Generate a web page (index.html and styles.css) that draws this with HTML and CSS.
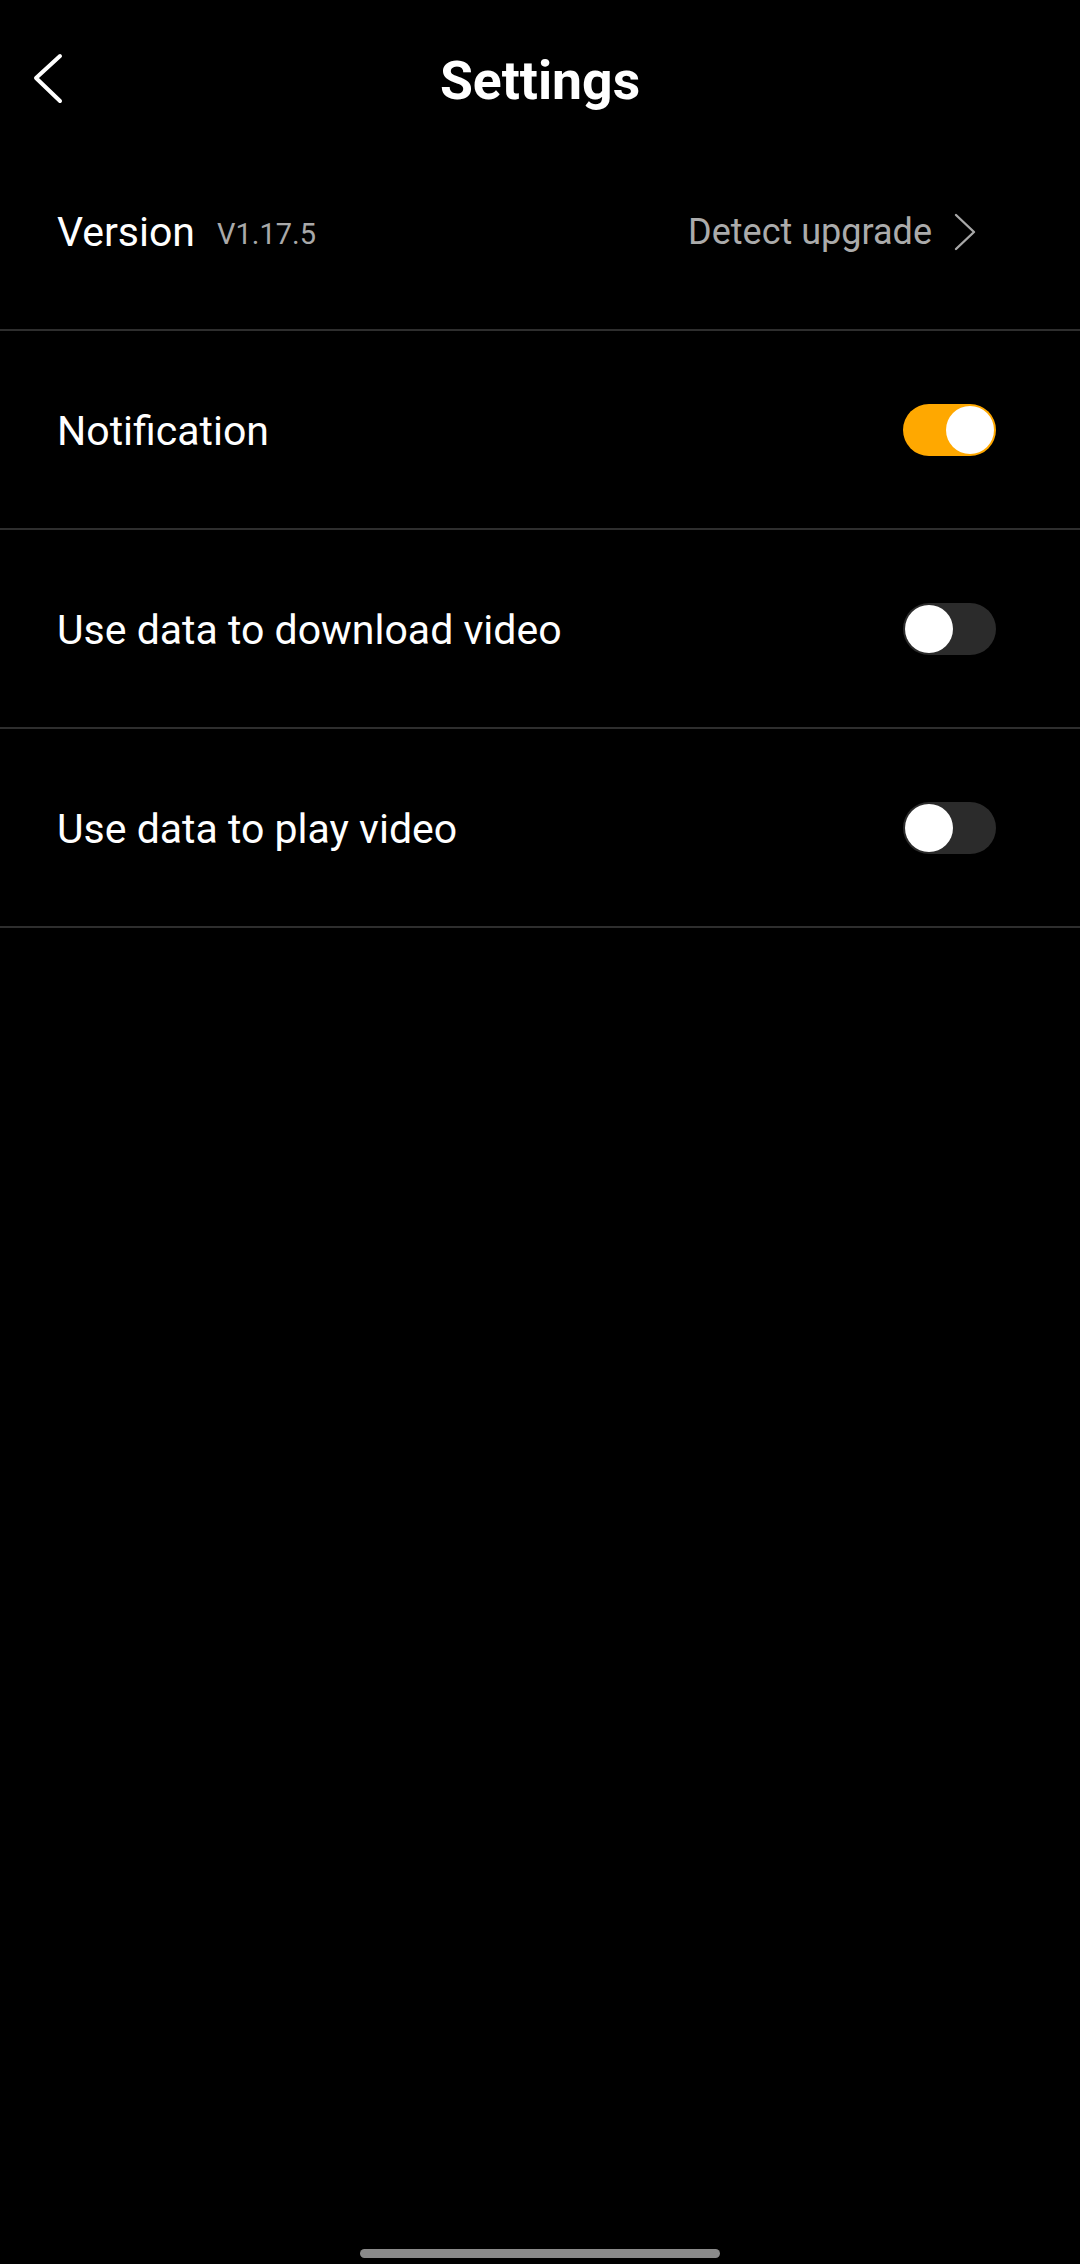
FILE: index.html
```html
<!DOCTYPE html>
<html lang="en">
<head>
<meta charset="utf-8">
<title>Settings</title>
<link rel="stylesheet" href="styles.css">
</head>
<body>
<div class="screen">
  <header class="topbar">
    <button class="back" aria-label="Back">
      <svg width="34" height="54" viewBox="0 0 34 54"><path d="M28 4 L4 26 L28 49" fill="none" stroke="#fff" stroke-width="4" stroke-linecap="round" stroke-linejoin="round"/></svg>
    </button>
    <h1 class="title">Settings</h1>
    <span class="spacer"></span>
  </header>

  <ul class="list">
    <li class="row">
      <div class="label-group">
        <span class="label">Version</span>
        <span class="version">V1.17.5</span>
      </div>
      <div class="action">
        <span class="action-text">Detect upgrade</span>
        <svg class="chev" width="24" height="38" viewBox="0 0 24 38"><path d="M3 2 L21 19 L3 36" fill="none" stroke="#a8a8a8" stroke-width="2.4" stroke-linecap="round" stroke-linejoin="round"/></svg>
      </div>
    </li>
    <li class="row">
      <span class="label">Notification</span>
      <span class="toggle on"><span class="knob"></span></span>
    </li>
    <li class="row">
      <span class="label">Use data to download video</span>
      <span class="toggle"><span class="knob"></span></span>
    </li>
    <li class="row">
      <span class="label">Use data to play video</span>
      <span class="toggle"><span class="knob"></span></span>
    </li>
  </ul>

  <div class="home-indicator"></div>
</div>
</body>
</html>
```

FILE: styles.css
```css
* {
  box-sizing: border-box;
}

html, body {
  margin: 0;
  padding: 0;
  background: #000;
}

body {
  font-family: Roboto, "Noto Sans", "Liberation Sans", sans-serif;
  color: #fff;
}

.screen {
  width: 1080px;
  min-height: 2264px;
  background: #000;
}

.topbar {
  height: 132px;
  padding-top: 50px;
  display: grid;
  grid-template-columns: 1fr auto 1fr;
  align-items: start;
}

.back {
  justify-self: start;
  margin: 2px 0 0 32px;
  padding: 0;
  border: 0;
  background: none;
  width: 34px;
  height: 54px;
  display: block;
}

.back svg {
  display: block;
}

.title {
  margin: 0;
  font-size: 53.5px;
  font-weight: 700;
  line-height: 62px;
  color: #fff;
  letter-spacing: 0;
}

.list {
  list-style: none;
  margin: 0;
  padding: 0;
}

.row {
  height: 199px;
  border-bottom: 2px solid #2e2e2e;
  display: flex;
  align-items: center;
  justify-content: space-between;
  padding: 2px 84px 0 57px;
}

.label-group {
  display: flex;
  align-items: baseline;
  gap: 22px;
}

.label {
  font-size: 41px;
  color: #fff;
}

.version {
  font-size: 29px;
  color: #a9a9a9;
  position: relative;
  top: -2px;
}

.action {
  display: flex;
  align-items: center;
  gap: 21px;
  margin-right: 19px;
}

.action-text {
  font-size: 36px;
  color: #ababab;
}

.chev {
  display: block;
}

.toggle {
  width: 93px;
  height: 52px;
  border-radius: 26px;
  background: #2b2b2b;
  padding: 2px;
  display: flex;
  align-items: center;
  position: relative;
  top: -1px;
}

.toggle .knob {
  width: 48px;
  height: 48px;
  border-radius: 50%;
  background: #fff;
}

.toggle.on {
  background: #ffa800;
  justify-content: flex-end;
}

.home-indicator {
  position: fixed;
  left: 360px;
  bottom: 6px;
  width: 360px;
  height: 9px;
  border-radius: 5px;
  background: #8a8a8a;
}
```
